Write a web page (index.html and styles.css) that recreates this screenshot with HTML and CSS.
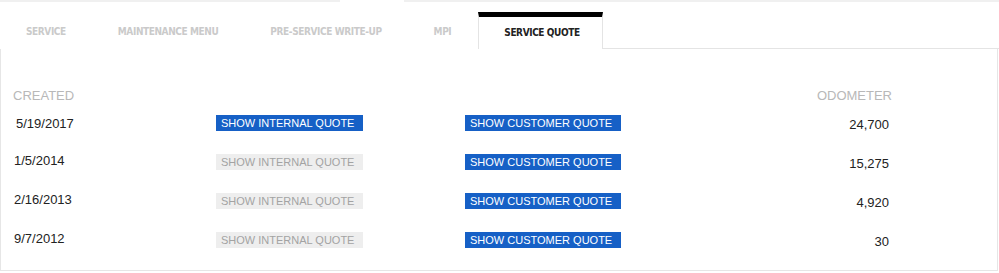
FILE: index.html
```html
<!DOCTYPE html>
<html>
<head>
    <meta charset="UTF-8">
    <meta name="viewport" content="width=device-width, initial-scale=1.0">
    <title>Service Quote</title>
    <link rel="stylesheet" href="styles.css">
</head>
<body>
    <div class="topline">
        <div class="seg"></div>
        <div class="gap"></div>
        <div class="seg grow"></div>
    </div>

    <div class="tabs">
        <div class="tab">SERVICE</div>
        <div class="tab">MAINTENANCE MENU</div>
        <div class="tab">PRE-SERVICE WRITE-UP</div>
        <div class="tab">MPI</div>
        <div class="tab active">SERVICE QUOTE</div>
        <div class="tab-fill"></div>
    </div>

    <div class="panel">
        <div class="quotes">
            <div class="head">CREATED</div>
            <div></div>
            <div></div>
            <div class="head right">ODOMETER</div>

            <div class="date first">5/19/2017</div>
            <div><button class="btn">SHOW INTERNAL QUOTE</button></div>
            <div><button class="btn">SHOW CUSTOMER QUOTE</button></div>
            <div class="odo">24,700</div>

            <div class="date">1/5/2014</div>
            <div><button class="btn off">SHOW INTERNAL QUOTE</button></div>
            <div><button class="btn">SHOW CUSTOMER QUOTE</button></div>
            <div class="odo">15,275</div>

            <div class="date">2/16/2013</div>
            <div><button class="btn off">SHOW INTERNAL QUOTE</button></div>
            <div><button class="btn">SHOW CUSTOMER QUOTE</button></div>
            <div class="odo">4,920</div>

            <div class="date">9/7/2012</div>
            <div><button class="btn off">SHOW INTERNAL QUOTE</button></div>
            <div><button class="btn">SHOW CUSTOMER QUOTE</button></div>
            <div class="odo">30</div>
        </div>
    </div>
</body>
</html>
```

FILE: styles.css
```css
body {
    margin: 0;
    background: white;
    font-family: 'Liberation Sans', Arial, sans-serif;
    width: 999px;
    height: 273px;
    overflow: hidden;
}
.topline {
    display: flex;
    height: 2px;
}
.topline .seg {
    width: 340px;
    background: #f0f0f0;
}
.topline .gap {
    width: 64px;
}
.topline .grow {
    flex: 1;
}

/* tab row */
.tabs {
    display: flex;
    margin-top: 10px;
    height: 37px;
}
.tab {
    padding: 0 26px;
    font-family: 'DejaVu Sans Condensed', 'DejaVu Sans', sans-serif;
    font-weight: bold;
    font-size: 10px;
    letter-spacing: -0.4px;
    color: #cacaca;
    line-height: 40px;
    white-space: nowrap;
}
.tab:nth-child(4) {
    margin-right: 1px;
}
.tab.active {
    color: #222;
    border-top: 5px solid #000;
    border-left: 1px solid #e4e4e4;
    border-right: 1px solid #e4e4e4;
    line-height: 32px;
    padding: 0 22px 0 25px;
}
.tab-fill {
    flex: 1;
    border-bottom: 1px solid #e4e4e4;
}

.panel {
    border-left: 1px solid #e6e6e6;
    border-right: 1px solid #e6e6e6;
    border-bottom: 1px solid #e6e6e6;
    width: 998px;
    height: 222px;
    box-sizing: border-box;
    padding: 39px 105px 0 12px;
}
.quotes {
    display: grid;
    grid-template-columns: 203px 249px 1fr 100px;
    grid-template-rows: 15px repeat(4, 39px);
    align-items: center;
}
.head {
    font-size: 13px;
    color: #b8b8b8;
    line-height: 15px;
}
.right { text-align: right; }
.date {
    font-size: 13px;
    color: #222;
    padding-left: 1px;
    margin-top: -3px;
}
.date.first {
    padding-left: 3px;
    margin-top: 2px;
}
.odo {
    font-size: 13px;
    color: #222;
    text-align: right;
    padding-right: 3px;
    margin-top: 3px;
}
.btn {
    font-family: 'Liberation Sans', Arial, sans-serif;
    font-size: 11px;
    border: none;
    border-radius: 0;
    background: #1660c6;
    color: white;
    padding: 0 9px 0 5px;
    height: 16px;
    line-height: 16px;
    display: block;
}
.btn.off {
    background: #eeeeee;
    color: #a3a3a3;
}
```
